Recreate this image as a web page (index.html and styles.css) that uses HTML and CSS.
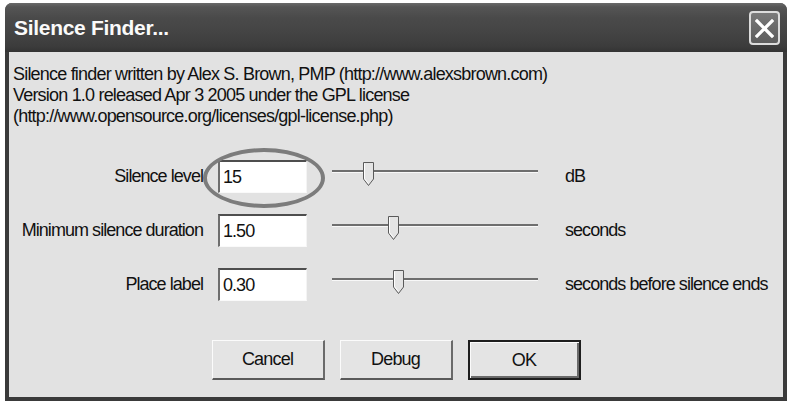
FILE: index.html
```html
<!DOCTYPE html>
<html lang="en">
<head>
<meta charset="utf-8">
<title>Silence Finder...</title>
<link rel="stylesheet" href="styles.css">
</head>
<body>
<div class="window">
  <div class="titlebar">
    <span class="title">Silence Finder...</span>
    <button class="close" aria-label="Close">
      <svg width="21" height="21" viewBox="0 0 21 21"><path d="M3 3 L18 18 M18 3 L3 18" stroke="#fff" stroke-width="3.2" stroke-linecap="square" fill="none"/></svg>
    </button>
  </div>
  <div class="body">
    <div class="about">
      <div>Silence finder written by Alex S. Brown, PMP (http://www.alexsbrown.com)</div>
      <div>Version 1.0 released Apr 3 2005 under the GPL license</div>
      <div>(http://www.opensource.org/licenses/gpl-license.php)</div>
    </div>
    <div class="form">
      <label class="lbl">Silence level</label>
      <div class="field">
        <div class="input">15</div>
        <div class="ring"></div>
      </div>
      <div class="slider">
        <div class="track"></div>
        <svg class="thumb t1" width="11" height="24" viewBox="0 0 11 24"><path d="M0.5 0.5 H10.5 V17 L5.5 23.5 L0.5 17 Z" fill="#e4e4e4" stroke="#5a5a5a" stroke-width="1"/><path d="M1.5 1.5 V16.6 L5.5 21.6" stroke="#fff" fill="none"/></svg>
      </div>
      <span class="unit">dB</span>

      <label class="lbl">Minimum silence duration</label>
      <div class="field"><div class="input">1.50</div></div>
      <div class="slider">
        <div class="track"></div>
        <svg class="thumb t2" width="11" height="24" viewBox="0 0 11 24"><path d="M0.5 0.5 H10.5 V17 L5.5 23.5 L0.5 17 Z" fill="#e4e4e4" stroke="#5a5a5a" stroke-width="1"/><path d="M1.5 1.5 V16.6 L5.5 21.6" stroke="#fff" fill="none"/></svg>
      </div>
      <span class="unit">seconds</span>

      <label class="lbl">Place label</label>
      <div class="field"><div class="input">0.30</div></div>
      <div class="slider">
        <div class="track"></div>
        <svg class="thumb t3" width="11" height="24" viewBox="0 0 11 24"><path d="M0.5 0.5 H10.5 V17 L5.5 23.5 L0.5 17 Z" fill="#e4e4e4" stroke="#5a5a5a" stroke-width="1"/><path d="M1.5 1.5 V16.6 L5.5 21.6" stroke="#fff" fill="none"/></svg>
      </div>
      <span class="unit">seconds before silence ends</span>
    </div>
    <div class="buttons">
      <button class="btn">Cancel</button>
      <button class="btn">Debug</button>
      <button class="btn default">OK</button>
    </div>
  </div>
</div>
</body>
</html>
```

FILE: styles.css
```css
html, body {
  margin: 0;
  padding: 0;
  background: #ffffff;
}
body {
  font-family: "Liberation Sans", Arial, sans-serif;
  color: #111;
}
.window {
  margin: 3px 0 0 5px;
  width: 782px;
  height: 398px;
  display: flex;
  flex-direction: column;
  background: #3a3a3a;
  border-radius: 7px 7px 0 0;
  overflow: hidden;
}
.titlebar {
  height: 49px;
  flex: none;
  display: flex;
  align-items: center;
  justify-content: space-between;
  padding: 0 7px 0 8px;
  background: linear-gradient(#6a6a6a 0, #555 8%, #4a4a4a 30%, #444 60%, #3c3c3c 88%, #333 100%);
}
.title {
  font-family: "Liberation Sans", Arial, sans-serif;
  font-weight: bold;
  font-size: 21px;
  color: #fafafa;
  letter-spacing: -0.3px;
  padding: 1px 0 0 1px;
}
.close {
  width: 31px;
  height: 34px;
  padding: 0;
  margin-top: 1px;
  border: 2px solid #dcdcdc;
  border-radius: 4px;
  background: linear-gradient(#7a7a7a, #6a6a6a 50%, #5e5e5e);
  display: flex;
  align-items: center;
  justify-content: center;
}
.body {
  flex: 1;
  margin: 0 4px 4px 4px;
  background: #e2e2e2;
  display: flex;
  flex-direction: column;
  font-size: 18px;
  letter-spacing: -0.8px;
}
.about {
  padding: 12px 0 0 4px;
  line-height: 21px;
}
.form {
  margin-top: 33px;
  display: grid;
  grid-template-columns: 194px 104px 231px auto;
  grid-auto-rows: 33px;
  row-gap: 21px;
  align-items: center;
  letter-spacing: -0.95px;
}
.lbl {
  text-align: right;
  white-space: nowrap;
}
.field {
  position: relative;
  margin-left: 15px;
  width: 89px;
  height: 33px;
}
.input {
  box-sizing: border-box;
  width: 89px;
  height: 33px;
  background: #fff;
  border-top: 2px solid #4e4e4e;
  border-left: 2px solid #6e6e6e;
  border-right: 1px solid #f4f4f4;
  border-bottom: 1px solid #fafafa;
  padding: 4px 0 0 3px;
  line-height: 22px;
}
.ring {
  position: absolute;
  left: -15px;
  top: -12px;
  width: 114px;
  height: 52px;
  border: 4px solid #7c7c7c;
  border-radius: 50%;
  pointer-events: none;
}
.slider {
  position: relative;
  margin-left: 25px;
  width: 206px;
  height: 33px;
}
.track {
  position: absolute;
  left: 0;
  right: 0;
  top: 10px;
  height: 2px;
  background: #6e6e6e;
  border-bottom: 1px solid #f8f8f8;
}
.thumb {
  position: absolute;
  top: 2px;
}
.t1 { left: 31px; }
.t2 { left: 56px; }
.t3 { left: 61px; }
.unit {
  margin-left: 27px;
  white-space: nowrap;
}
.buttons {
  margin-top: 39px;
  display: flex;
  justify-content: center;
  gap: 15px;
}
.btn {
  box-sizing: border-box;
  width: 113px;
  height: 40px;
  font-family: "Liberation Sans", Arial, sans-serif;
  font-size: 18px;
  letter-spacing: -0.8px;
  color: #111;
  background: #e4e4e4;
  border-top: 1px solid #fbfbfb;
  border-left: 1px solid #fbfbfb;
  border-right: 2px solid #6a6a6a;
  border-bottom: 2px solid #5a5a5a;
  padding: 0;
}
.btn.default {
  border: 2px solid #1e1e1e;
  box-shadow: inset 1px 1px 0 #fbfbfb, inset -2px -2px 0 #6a6a6a;
}
```
